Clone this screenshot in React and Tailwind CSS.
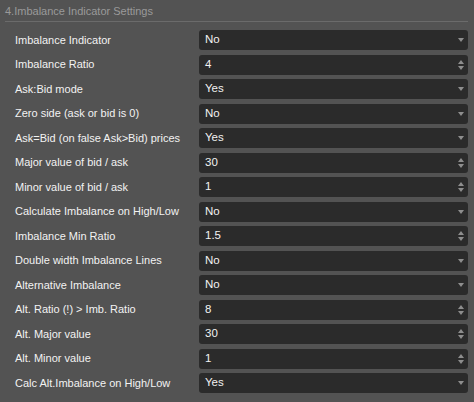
import React from "react";

const rows = [
  ["Imbalance Indicator", "No", "select"],
  ["Imbalance Ratio", "4", "spin"],
  ["Ask:Bid mode", "Yes", "select"],
  ["Zero side (ask or bid is 0)", "No", "select"],
  ["Ask=Bid (on false Ask>Bid) prices", "Yes", "select"],
  ["Major value of bid / ask", "30", "spin"],
  ["Minor value of bid / ask", "1", "spin"],
  ["Calculate Imbalance on High/Low", "No", "select"],
  ["Imbalance Min Ratio", "1.5", "spin"],
  ["Double width Imbalance Lines", "No", "select"],
  ["Alternative Imbalance", "No", "select"],
  ["Alt. Ratio (!) > Imb. Ratio", "8", "spin"],
  ["Alt. Major value", "30", "spin"],
  ["Alt. Minor value", "1", "spin"],
  ["Calc Alt.Imbalance on High/Low", "Yes", "select"],
];

function Down() {
  return (
    <svg width="6" height="4" viewBox="0 0 6 4" className="block">
      <path d="M0 0 L6 0 L3 4 Z" fill="#8e8e8e" />
    </svg>
  );
}

function Spin() {
  return (
    <div className="flex flex-col gap-[2px]">
      <svg width="6" height="4" viewBox="0 0 6 4" className="block">
        <path d="M0 4 L6 4 L3 0 Z" fill="#8e8e8e" />
      </svg>
      <svg width="6" height="4" viewBox="0 0 6 4" className="block">
        <path d="M0 0 L6 0 L3 4 Z" fill="#8e8e8e" />
      </svg>
    </div>
  );
}

export default function App() {
  return (
    <div
      className="w-[474px] h-[402px] bg-[#535353] overflow-hidden"
      style={{ fontFamily: '"Liberation Sans", Arial, sans-serif' }}
    >
      <div className="mx-[5px] w-[463px] h-[22px] border-b border-[#6b6b6b] pt-[4px] text-[11px] leading-[14px] text-[#9a9a9a]">
        4.Imbalance Indicator Settings
      </div>
      <div className="mt-[5.75px]">
        {rows.map(([label, value, kind]) => (
          <div key={label} className="h-[24.5px] flex items-center">
            <div className="w-[199px] pl-[15px] text-[11px] text-[#f2f2f2] whitespace-nowrap">
              {label}
            </div>
            <div className="w-[269px] h-[20px] rounded-[3px] bg-[#2b2b2b] flex items-center justify-between pl-[6px] pr-[4px]">
              <span className="text-[11.5px] text-[#f2f2f2]">{value}</span>
              {kind === "select" ? <Down /> : <Spin />}
            </div>
          </div>
        ))}
      </div>
    </div>
  );
}
